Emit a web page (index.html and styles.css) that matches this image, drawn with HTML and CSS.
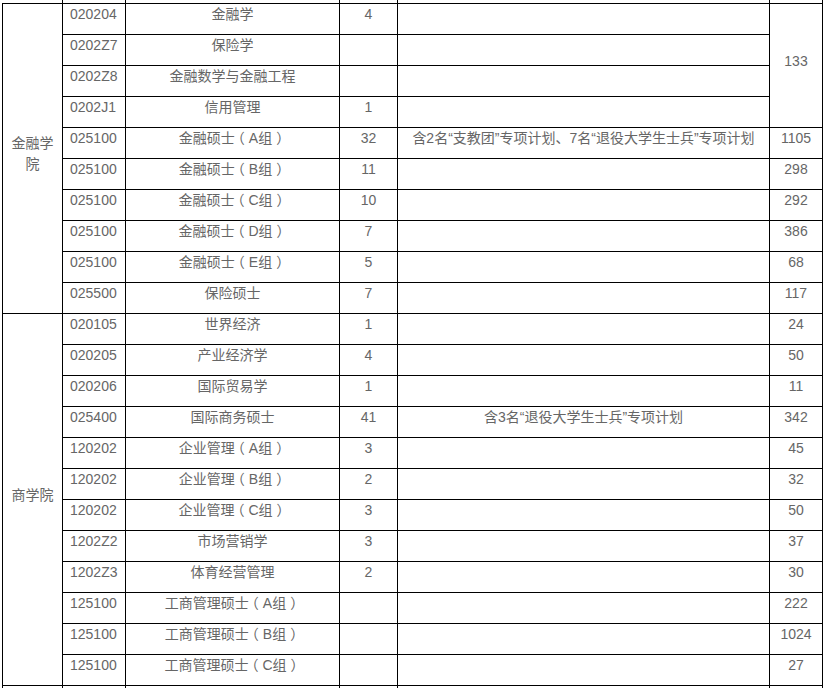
FILE: index.html
```html
<!DOCTYPE html>
<html lang="zh-CN">
<head>
<meta charset="utf-8">
<title>招生计划</title>
<link rel="stylesheet" href="styles.css">
</head>
<body>
<table class="plan">
  <colgroup>
    <col class="c-college"><col class="c-code"><col class="c-name"><col class="c-num"><col class="c-note"><col class="c-total">
  </colgroup>
  <tbody>
    <tr class="prev"><td class="college noleft"></td><td class="code"></td><td></td><td></td><td></td><td></td></tr>
    <tr><td class="college" rowspan="10">金融学院</td><td class="code">020204</td><td>金融学</td><td>4</td><td></td><td rowspan="4">133</td></tr>
    <tr><td class="code">0202Z7</td><td>保险学</td><td></td><td></td></tr>
    <tr><td class="code">0202Z8</td><td>金融数学与金融工程</td><td></td><td></td></tr>
    <tr><td class="code">0202J1</td><td>信用管理</td><td>1</td><td></td></tr>
    <tr><td class="code">025100</td><td>金融硕士<span class="po">（</span>A组<span class="pc">）</span></td><td>32</td><td>含2名“支教团”专项计划、7名“退役大学生士兵”专项计划</td><td>1105</td></tr>
    <tr><td class="code">025100</td><td>金融硕士<span class="po">（</span>B组<span class="pc">）</span></td><td>11</td><td></td><td>298</td></tr>
    <tr><td class="code">025100</td><td>金融硕士<span class="po">（</span>C组<span class="pc">）</span></td><td>10</td><td></td><td>292</td></tr>
    <tr><td class="code">025100</td><td>金融硕士<span class="po">（</span>D组<span class="pc">）</span></td><td>7</td><td></td><td>386</td></tr>
    <tr><td class="code">025100</td><td>金融硕士<span class="po">（</span>E组<span class="pc">）</span></td><td>5</td><td></td><td>68</td></tr>
    <tr><td class="code">025500</td><td>保险硕士</td><td>7</td><td></td><td>117</td></tr>
    <tr><td class="college" rowspan="12">商学院</td><td class="code">020105</td><td>世界经济</td><td>1</td><td></td><td>24</td></tr>
    <tr><td class="code">020205</td><td>产业经济学</td><td>4</td><td></td><td>50</td></tr>
    <tr><td class="code">020206</td><td>国际贸易学</td><td>1</td><td></td><td>11</td></tr>
    <tr><td class="code">025400</td><td>国际商务硕士</td><td>41</td><td>含3名“退役大学生士兵”专项计划</td><td>342</td></tr>
    <tr><td class="code">120202</td><td>企业管理<span class="po">（</span>A组<span class="pc">）</span></td><td>3</td><td></td><td>45</td></tr>
    <tr><td class="code">120202</td><td>企业管理<span class="po">（</span>B组<span class="pc">）</span></td><td>2</td><td></td><td>32</td></tr>
    <tr><td class="code">120202</td><td>企业管理<span class="po">（</span>C组<span class="pc">）</span></td><td>3</td><td></td><td>50</td></tr>
    <tr><td class="code">1202Z2</td><td>市场营销学</td><td>3</td><td></td><td>37</td></tr>
    <tr><td class="code">1202Z3</td><td>体育经营管理</td><td>2</td><td></td><td>30</td></tr>
    <tr><td class="code">125100</td><td>工商管理硕士<span class="po">（</span>A组<span class="pc">）</span></td><td></td><td></td><td>222</td></tr>
    <tr><td class="code">125100</td><td>工商管理硕士<span class="po">（</span>B组<span class="pc">）</span></td><td></td><td></td><td>1024</td></tr>
    <tr><td class="code">125100</td><td>工商管理硕士<span class="po">（</span>C组<span class="pc">）</span></td><td></td><td></td><td>27</td></tr>
    <tr><td class="college"></td><td class="code"></td><td></td><td></td><td></td><td></td></tr>
  </tbody>
</table>
</body>
</html>
```
FILE: styles.css
```css
html, body {
  margin: 0;
  padding: 0;
  background: #ffffff;
}
body {
  font-family: "Liberation Sans", Arial, "Noto Sans CJK SC", sans-serif;
  font-size: 14px;
  color: #666666;
}
.plan {
  border-collapse: collapse;
  table-layout: fixed;
  width: 821px;
  margin: -28px 0 0 2px;
}
.c-college { width: 60px; }
.c-code { width: 63px; }
.c-name { width: 214px; }
.c-num { width: 58px; }
.c-note { width: 372px; }
.c-total { width: 53px; }
.plan td {
  border: 1px solid #000000;
  padding: 0 8px 9px;
  line-height: 21px;
  height: 21px;
  text-align: center;
  vertical-align: middle;
  white-space: nowrap;
  overflow: hidden;
}
.plan td.college {
  white-space: normal;
  word-break: break-all;
  padding: 0 8px 9px;
}
.plan td.code {
  text-align: left;
  padding-left: 7px;
}
.plan td.noleft {
  border-left-color: transparent;
}
.po {
  font-feature-settings: "halt" 1;
  padding-left: 3px;
  padding-right: 4px;
}
.pc {
  font-feature-settings: "halt" 1;
  padding-left: 4px;
  padding-right: 3px;
}
```
